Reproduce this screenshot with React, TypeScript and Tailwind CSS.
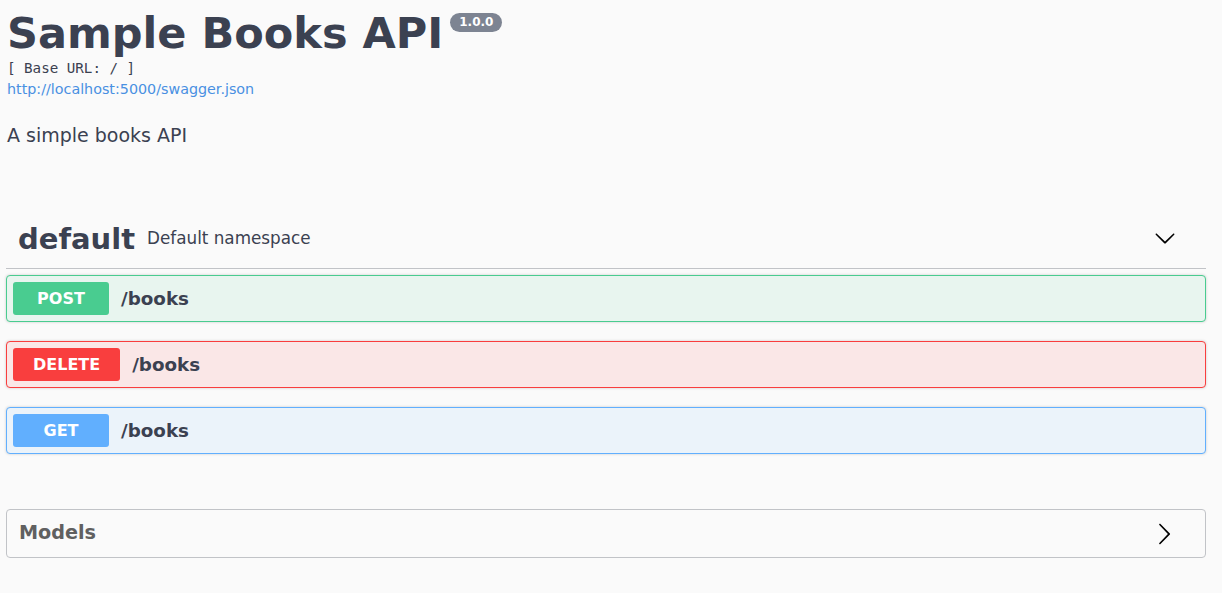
const ArrowDown = () => (
  <svg width="22" height="22" viewBox="0 0 20 20" className="fill-black">
    <path d="M17.418 6.109c.272-.268.709-.268.979 0s.271.701 0 .969l-7.908 7.83c-.27.268-.707.268-.979 0l-7.908-7.830c-.27-.268-.27-.701 0-.969.271-.268.709-.268.979 0L10 13.25l7.418-7.141z" />
  </svg>
);

const ArrowRight = () => (
  <svg width="24" height="24" viewBox="0 0 20 20" className="fill-black">
    <path d="M13.25 10L6.109 2.58c-.268-.27-.268-.707 0-.979.268-.27.701-.27.969 0l7.83 7.908c.268.271.268.709 0 .979l-7.83 7.908c-.268.271-.701.27-.969 0-.268-.269-.268-.707 0-.979L13.25 10z" />
  </svg>
);

const ops = [
  { method: "POST", path: "/books", border: "border-[#49cc90]", bg: "bg-[#e8f5ef]", badge: "bg-[#49cc90]" },
  { method: "DELETE", path: "/books", border: "border-[#f93e3e]", bg: "bg-[#fae7e7]", badge: "bg-[#f93e3e]" },
  { method: "GET", path: "/books", border: "border-[#61affe]", bg: "bg-[#ebf3fa]", badge: "bg-[#61affe]" },
];

export default function App() {
  return (
    <div className="min-h-screen bg-[#fafafa] text-[#3b4151] font-['DejaVu_Sans',sans-serif]">
      <div className="w-[1200px] ml-[6px] pt-[8px]">
        {/* info */}
        <div className="pl-[1px]">
          <div className="flex items-start">
            <h2 className="text-[43px] leading-[50px] font-bold">Sample Books API</h2>
            <span className="ml-[7px] mt-[5px] rounded-full bg-[#7d8492] px-[9px] h-[19px] leading-[19px] text-[12px] font-bold text-white">
              1.0.0
            </span>
          </div>
          <div className="font-['DejaVu_Sans_Mono',monospace] text-[14.2px] leading-[18px] mt-[1px]">[ Base URL: / ]</div>
          <a className="block mt-[2px] text-[14.3px] leading-[20px] text-[#4990e2]">http://localhost:5000/swagger.json</a>
          <p className="mt-[24px] text-[19px] leading-[24px]">A simple books API</p>
        </div>

        {/* tag section */}
        <div className="mt-[62px]">
          <div className="flex items-center border-b border-[#c1c3c7] h-[60px] pl-[12px] pr-[30px]">
            <h4 className="text-[29px] font-bold leading-[34px]">default</h4>
            <span className="ml-[12px] text-[16.8px]">Default namespace</span>
            <span className="ml-auto mt-[-2px]">
              <ArrowDown />
            </span>
          </div>
          <div className="pt-[6px] flex flex-col gap-[19px]">
            {ops.map((op) => (
              <div
                key={op.method}
                className={`flex items-center rounded-[4px] border p-[6px] shadow-[0_0_3px_rgba(0,0,0,0.19)] ${op.border} ${op.bg}`}
              >
                <span
                  className={`min-w-[96px] px-[20px] h-[33px] leading-[33px] rounded-[3px] text-center text-[16px] font-bold text-white ${op.badge}`}
                >
                  {op.method}
                </span>
                <span className="ml-[12px] font-bold text-[18.3px]">{op.path}</span>
              </div>
            ))}
          </div>
        </div>

        {/* models */}
        <div className="mt-[55px] flex items-center h-[49px] rounded-[4px] border border-[#c1c3c7] pl-[12px] pr-[29px]">
          <h4 className="text-[19.2px] font-bold text-[#606060]">Models</h4>
          <span className="ml-auto">
            <ArrowRight />
          </span>
        </div>
      </div>
    </div>
  );
}
